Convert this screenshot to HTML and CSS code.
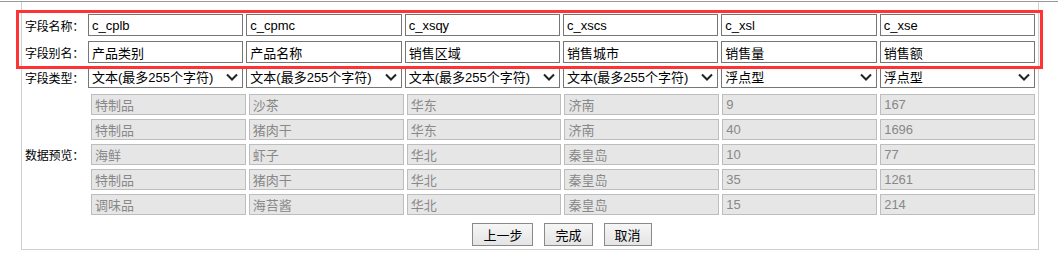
FILE: index.html
```html
<!DOCTYPE html>
<html>
<head>
	<meta charset="utf-8">
	<title>字段设置</title>
	<link rel="stylesheet" href="styles.css">
</head>
<body>
	<div class="topline"></div>
	<div class="panel">
		<div class="row row-name">
			<label class="lbl">字段名称：</label>
			<div class="cell"><input class="txt" value="c_cplb"></div>
			<div class="cell"><input class="txt" value="c_cpmc"></div>
			<div class="cell"><input class="txt" value="c_xsqy"></div>
			<div class="cell"><input class="txt" value="c_xscs"></div>
			<div class="cell"><input class="txt" value="c_xsl"></div>
			<div class="cell"><input class="txt" value="c_xse"></div>
		</div>
		<div class="row row-alias">
			<label class="lbl">字段别名：</label>
			<div class="cell"><input class="txt" value="产品类别"></div>
			<div class="cell"><input class="txt" value="产品名称"></div>
			<div class="cell"><input class="txt" value="销售区域"></div>
			<div class="cell"><input class="txt" value="销售城市"></div>
			<div class="cell"><input class="txt" value="销售量"></div>
			<div class="cell"><input class="txt" value="销售额"></div>
		</div>
		<div class="row row-type">
			<label class="lbl">字段类型：</label>
			<div class="cell sel"><select><option>文本(最多255个字符)</option></select><svg class="chev" viewBox="0 0 12 8"><path d="M1 1.5 L6 6.5 L11 1.5" /></svg></div>
			<div class="cell sel"><select><option>文本(最多255个字符)</option></select><svg class="chev" viewBox="0 0 12 8"><path d="M1 1.5 L6 6.5 L11 1.5" /></svg></div>
			<div class="cell sel"><select><option>文本(最多255个字符)</option></select><svg class="chev" viewBox="0 0 12 8"><path d="M1 1.5 L6 6.5 L11 1.5" /></svg></div>
			<div class="cell sel"><select><option>文本(最多255个字符)</option></select><svg class="chev" viewBox="0 0 12 8"><path d="M1 1.5 L6 6.5 L11 1.5" /></svg></div>
			<div class="cell sel"><select><option>浮点型</option></select><svg class="chev" viewBox="0 0 12 8"><path d="M1 1.5 L6 6.5 L11 1.5" /></svg></div>
			<div class="cell sel"><select><option>浮点型</option></select><svg class="chev" viewBox="0 0 12 8"><path d="M1 1.5 L6 6.5 L11 1.5" /></svg></div>
		</div>
		<div class="preview">
			<label class="lbl">数据预览：</label>
			<div class="grid">
				<input class="ro" value="特制品" readonly><input class="ro" value="沙茶" readonly><input class="ro" value="华东" readonly><input class="ro" value="济南" readonly><input class="ro" value="9" readonly><input class="ro" value="167" readonly>
				<input class="ro" value="特制品" readonly><input class="ro" value="猪肉干" readonly><input class="ro" value="华东" readonly><input class="ro" value="济南" readonly><input class="ro" value="40" readonly><input class="ro" value="1696" readonly>
				<input class="ro" value="海鲜" readonly><input class="ro" value="虾子" readonly><input class="ro" value="华北" readonly><input class="ro" value="秦皇岛" readonly><input class="ro" value="10" readonly><input class="ro" value="77" readonly>
				<input class="ro" value="特制品" readonly><input class="ro" value="猪肉干" readonly><input class="ro" value="华北" readonly><input class="ro" value="秦皇岛" readonly><input class="ro" value="35" readonly><input class="ro" value="1261" readonly>
				<input class="ro" value="调味品" readonly><input class="ro" value="海苔酱" readonly><input class="ro" value="华北" readonly><input class="ro" value="秦皇岛" readonly><input class="ro" value="15" readonly><input class="ro" value="214" readonly>
			</div>
		</div>
		<div class="actions">
			<button class="btn">上一步</button>
			<button class="btn">完成</button>
			<button class="btn">取消</button>
		</div>
	</div>
	<div class="mark"></div>
</body>
</html>
```
FILE: styles.css
```css
*{
	margin: 0;
	padding: 0;
	box-sizing: border-box;
}
body{
	font-family: Arial, "Liberation Sans", "Noto Sans CJK SC", sans-serif;
	font-size: 13px;
	color: #000;
	background: #fff;
	position: relative;
}
.topline{
	margin-top: 1px;
	height: 1px;
	background: #999;
}
.panel{
	margin-left: 21px;
	width: 1018px;
	border: 1px solid #d0d0d0;
	border-top: none;
	padding: 12px 0 3px 0;
}
.row{
	display: grid;
	grid-template-columns: 66px repeat(6, 1fr);
	align-items: center;
}
.row-alias{
	margin-top: 5px;
}
.row-type{
	margin-top: 4px;
}
.lbl{
	font-family: "Noto Sans CJK SC", sans-serif;
	font-size: 12px;
	padding-left: 3px;
	white-space: nowrap;
	letter-spacing: -0.2px;
}
.cell{
	position: relative;
	padding-right: 3px;
}
.txt{
	display: block;
	width: 100%;
	height: 22px;
	border: 1px solid #767676;
	padding: 0 3px;
	font-family: Arial, "Liberation Sans", "Noto Sans CJK SC", sans-serif;
	font-size: 13px;
	color: #000;
	outline: none;
}
.sel select{
	display: block;
	width: 100%;
	height: 21px;
	border: 1px solid #767676;
	background: #fff;
	padding: 0 3px;
	font-family: Arial, "Liberation Sans", "Noto Sans CJK SC", sans-serif;
	font-size: 13px;
	color: #000;
	-webkit-appearance: none;
	appearance: none;
	border-radius: 0;
}
.chev{
	position: absolute;
	right: 8px;
	top: 6px;
	width: 12px;
	height: 8px;
	fill: none;
	stroke: #222;
	stroke-width: 2;
}
.preview{
	display: grid;
	grid-template-columns: 66px 1fr;
	align-items: center;
	margin-top: 6px;
}
.grid{
	display: grid;
	grid-template-columns: repeat(6, 1fr);
	row-gap: 4px;
	column-gap: 3px;
	padding-right: 3px;
	padding-left: 3px;
}
.ro{
	display: block;
	width: 100%;
	height: 21px;
	background: #e6e6e6;
	border: 1px solid #bdbdbd;
	padding: 0 3px;
	font-family: Arial, "Liberation Sans", "Noto Sans CJK SC", sans-serif;
	font-size: 13px;
	color: #888;
	outline: none;
}
.actions{
	display: flex;
	justify-content: center;
	gap: 11px;
	margin-top: 8px;
	padding-left: 64px;
}
.btn{
	height: 23px;
	padding: 0 10px;
	border: 1px solid #8a8a8a;
	background: linear-gradient(#f6f6f6, #e4e4e4);
	font-family: "Noto Sans CJK SC", sans-serif;
	font-size: 13px;
	color: #000;
}
.mark{
	position: absolute;
	left: 16px;
	top: 10px;
	width: 1027px;
	height: 59px;
	border: 3px solid #f33;
	pointer-events: none;
}
```
